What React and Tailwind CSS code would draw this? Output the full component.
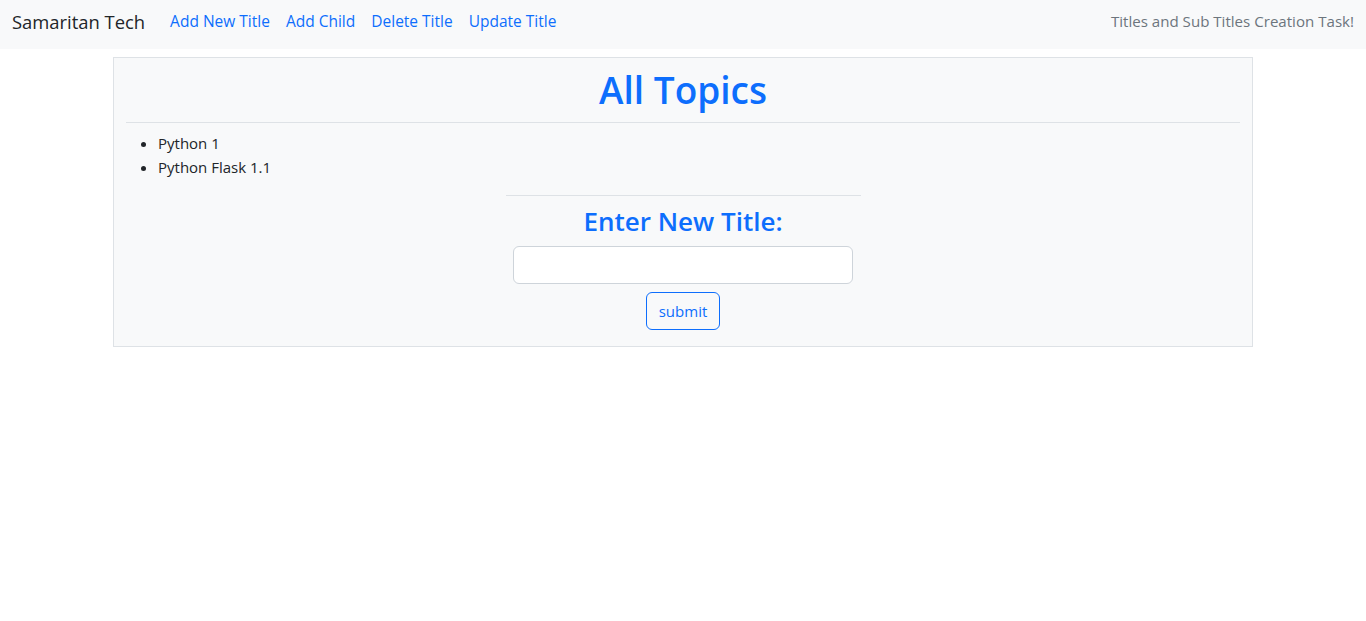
const links = ['Add New Title', 'Add Child', 'Delete Title', 'Update Title'];
const topics = ['Python 1', 'Python Flask 1.1'];

export default function App() {
  return (
    <div className="min-h-screen bg-white text-[#212529] font-['Open_Sans',sans-serif]">
      {/* Navbar */}
      <nav className="h-[49px] bg-[#f8f9fa] flex items-center justify-between px-3 pb-[6px]">
        <div className="flex items-center">
          <a className="text-[18.4px] text-[#212529] mr-[17px]">Samaritan Tech</a>
          {links.map((l) => (
            <a key={l} className="px-2 text-[15.5px] text-[#0d6efd]">
              {l}
            </a>
          ))}
        </div>
        <span className="text-[15.1px] text-[#6c757d]">Titles and Sub Titles Creation Task!</span>
      </nav>

      {/* Card */}
      <div className="w-[1140px] mx-auto mt-2 border border-[#dee2e6] bg-[#f8f9fa] px-3 pt-2 pb-4">
        <h1 className="text-center text-[37px] leading-[48px] font-semibold text-[#0d6efd]">All Topics</h1>
        <hr className="mt-2 border-[#dee2e6]" />
        <ul className="list-disc pl-8 mt-2 text-[15px] leading-6">
          {topics.map((t) => (
            <li key={t}>{t}</li>
          ))}
        </ul>
        <div className="flex flex-col items-center mt-4">
          <hr className="w-[355px] border-[#dee2e6]" />
          <h3 className="text-[26px] leading-[34px] font-semibold text-[#0d6efd] mt-2">Enter New Title:</h3>
          <input className="mt-2 w-[340px] h-[38px] bg-white border border-[#ced4da] rounded-[6px] px-3" />
          <button className="mt-2 h-[38px] px-3 border border-[#0d6efd] rounded-[6px] text-[#0d6efd] text-[15px]">
            submit
          </button>
        </div>
      </div>
    </div>
  );
}
